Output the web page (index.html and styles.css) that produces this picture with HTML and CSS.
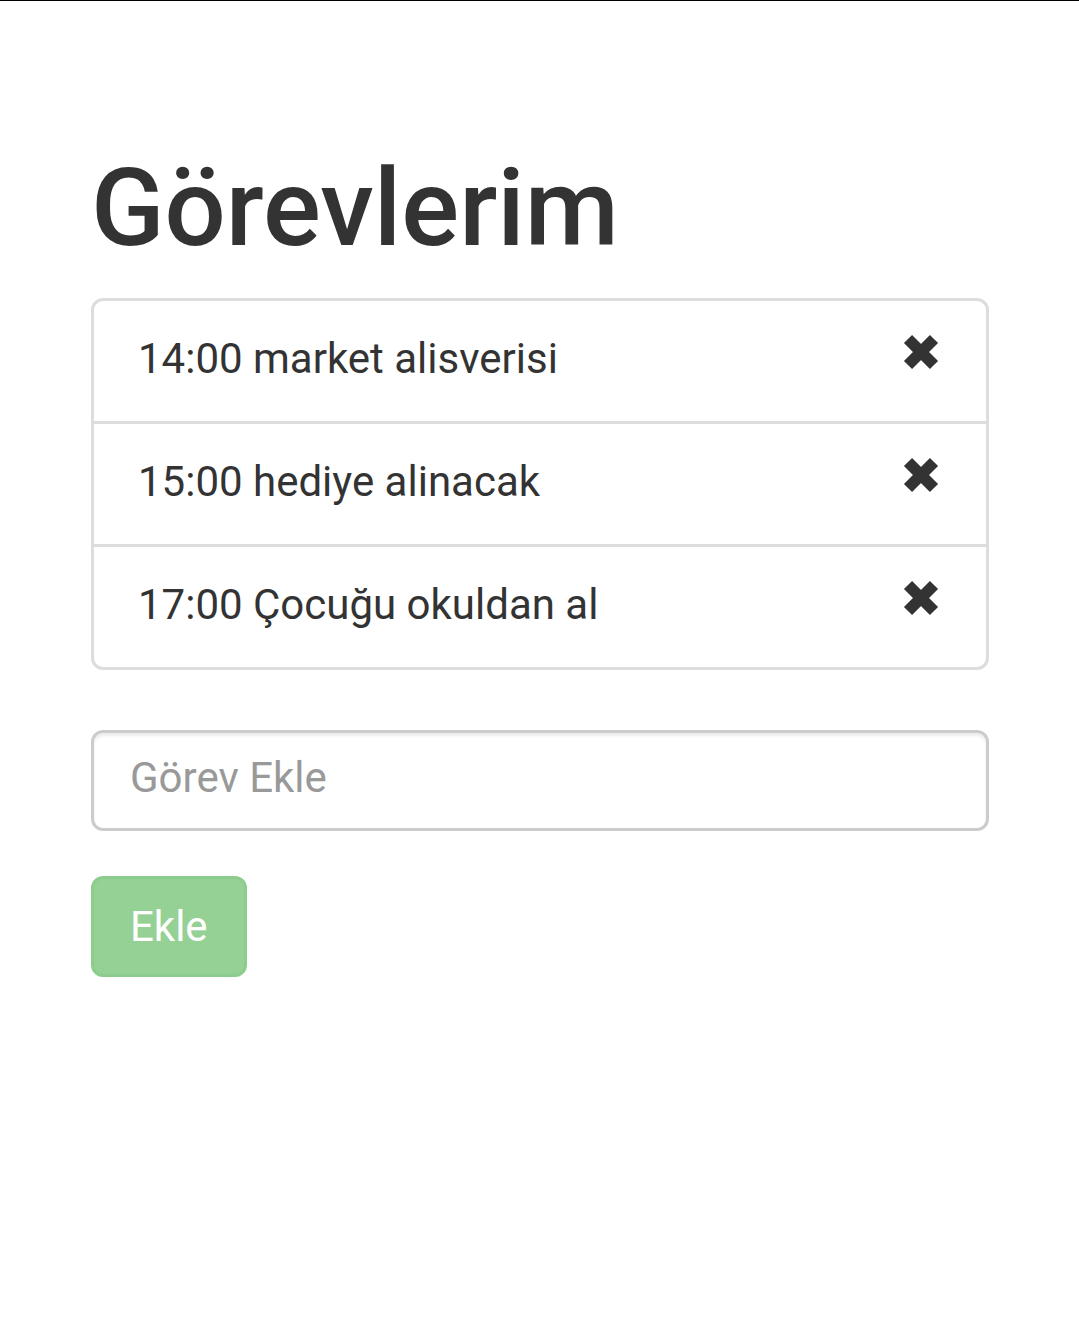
FILE: index.html
```html
<!DOCTYPE html>
<html lang="tr">
<head>
<meta charset="utf-8">
<title>Görevlerim</title>
<link rel="stylesheet" href="styles.css">
</head>
<body>
<div class="page">
  <h1 class="title">Görevlerim</h1>
  <ul class="task-list">
    <li class="task-item">
      <span class="task-text">14:00 market alisverisi</span>
      <span class="remove" aria-label="sil"><svg viewBox="0 0 36 36" width="36" height="36"><path d="M5 5 L31 31 M31 5 L5 31" stroke="#333" stroke-width="11.5" stroke-linecap="butt" fill="none"/></svg></span>
    </li>
    <li class="task-item">
      <span class="task-text">15:00 hediye alinacak</span>
      <span class="remove" aria-label="sil"><svg viewBox="0 0 36 36" width="36" height="36"><path d="M5 5 L31 31 M31 5 L5 31" stroke="#333" stroke-width="11.5" stroke-linecap="butt" fill="none"/></svg></span>
    </li>
    <li class="task-item">
      <span class="task-text">17:00 Çocuğu okuldan al</span>
      <span class="remove" aria-label="sil"><svg viewBox="0 0 36 36" width="36" height="36"><path d="M5 5 L31 31 M31 5 L5 31" stroke="#333" stroke-width="11.5" stroke-linecap="butt" fill="none"/></svg></span>
    </li>
  </ul>
  <input class="task-input" type="text" placeholder="Görev Ekle">
  <button class="add-btn" type="button">Ekle</button>
</div>
</body>
</html>
```
FILE: styles.css
```css
html, body {
  margin: 0;
  padding: 0;
  background: #fff;
}
body {
  border-top: 1px solid #000;
  font-family: Roboto, "Noto Sans", "Liberation Sans", sans-serif;
  color: #333;
}
.page {
  width: 898px;
  margin: 0 auto 0 91px;
  padding-top: 148px;
  display: flex;
  flex-direction: column;
  align-items: flex-start;
}
.title {
  margin: 0 0 30px;
  font-size: 108px;
  font-weight: 500;
  line-height: 119px;
  color: #333;
}
.task-list {
  list-style: none;
  margin: 0;
  padding: 0;
  width: 100%;
  box-sizing: border-box;
}
.task-item {
  display: flex;
  justify-content: space-between;
  align-items: flex-start;
  border: 3px solid #ddd;
  margin-bottom: -3px;
  padding: 28px 45px 32px 44px;
  font-size: 42px;
  line-height: 60px;
}
.task-item:first-child {
  border-top-left-radius: 12px;
  border-top-right-radius: 12px;
}
.task-item:last-child {
  margin-bottom: 0;
  border-bottom-left-radius: 12px;
  border-bottom-right-radius: 12px;
}
.remove {
  display: block;
  flex: none;
  width: 36px;
  height: 36px;
  margin-top: 5px;
  margin-right: 2px;
}
.remove svg {
  display: block;
}
.task-input {
  margin-top: 60px;
  width: 100%;
  height: 101px;
  box-sizing: border-box;
  border: 3px solid #ccc;
  border-radius: 12px;
  box-shadow: inset 0 3px 3px rgba(0,0,0,.075);
  padding: 0 36px 6px;
  font-family: Roboto, "Noto Sans", "Liberation Sans", sans-serif;
  font-size: 42px;
  color: #555;
  outline: none;
}
.task-input::placeholder {
  color: #999;
}
.add-btn {
  margin-top: 45px;
  height: 101px;
  box-sizing: border-box;
  padding: 0 36px;
  background: #95d195;
  border: 3px solid #8ccc8c;
  border-radius: 12px;
  color: #fff;
  font-family: Roboto, "Noto Sans", "Liberation Sans", sans-serif;
  font-size: 42px;
  line-height: 1;
}
```
